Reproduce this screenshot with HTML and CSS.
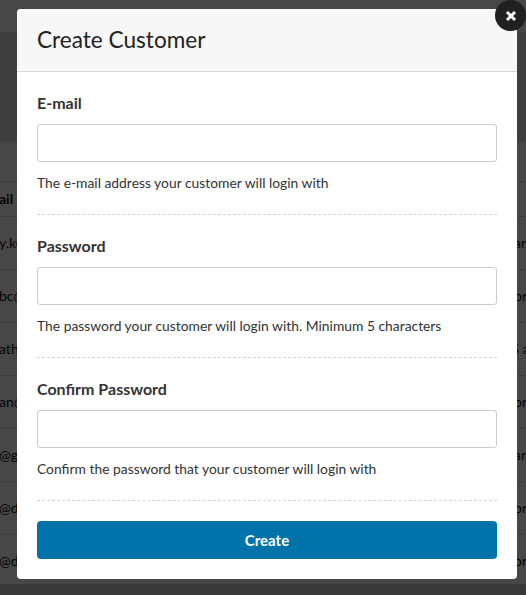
FILE: index.html
```html
<!DOCTYPE html>
<html lang="en">
<head>
<meta charset="utf-8">
<title>Create Customer</title>
<link rel="stylesheet" href="styles.css">
</head>
<body>
<div class="page">
  <div class="topbar"></div>
  <div class="band"></div>
  <div class="table-head"></div>
  <div class="thead"><span class="cell-left">ail</span></div>
  <div class="row"><span class="cell-left">y.ke</span><span class="cell-right">ar</span></div>
  <div class="row"><span class="cell-left">bc@</span><span class="cell-right">or</span></div>
  <div class="row"><span class="cell-left">ath</span><span class="cell-right cell-wide">5 a</span></div>
  <div class="row"><span class="cell-left">an@</span><span class="cell-right">or</span></div>
  <div class="row"><span class="cell-left">@gr</span><span class="cell-right">ar</span></div>
  <div class="row"><span class="cell-left">@d</span><span class="cell-right">or</span></div>
  <div class="row row-last"><span class="cell-left">@d</span><span class="cell-right">or</span></div>
  <div class="footer"></div>
</div>
<div class="overlay">
  <div class="modal">
    <button class="close" aria-label="Close">
      <svg width="12" height="12" viewBox="0 0 12 12"><path d="M2 2l8 8M10 2l-8 8" stroke="#fff" stroke-width="3" fill="none"/></svg>
    </button>
    <div class="modal-header"><h2>Create Customer</h2></div>
    <form class="modal-body">
      <div class="field">
        <label>E-mail</label>
        <input type="text">
        <p>The e-mail address your customer will login with</p>
      </div>
      <div class="field">
        <label>Password</label>
        <input type="password">
        <p>The password your customer will login with. Minimum 5 characters</p>
      </div>
      <div class="field">
        <label>Confirm Password</label>
        <input type="password">
        <p>Confirm the password that your customer will login with</p>
      </div>
      <button class="submit" type="button">Create</button>
    </form>
  </div>
</div>
</body>
</html>
```
FILE: styles.css
```css
* { box-sizing: border-box; }
html, body { margin: 0; height: 100%; }
body { font-family: Lato, sans-serif; color: #2b2b2b; background: #fff; overflow: hidden; }
.page { height: 595px; display: flex; flex-direction: column; background: #fff; overflow: hidden; }
.topbar { flex: none; height: 32px; background: #fff; }
.band { flex: none; height: 110px; background: #e0e0e0; }
.table-head { flex: none; height: 40px; background: #fff; border-bottom: 1px solid #ddd; }
.thead, .row { flex: none; display: flex; justify-content: space-between; font-size: 14px; color: #111; border-bottom: 1px solid #ddd; overflow: hidden; }
.thead { height: 35px; font-weight: 700; line-height: 34px; }
.row { height: 53px; line-height: 52px; }
.row-last { height: 49px; border-bottom: 0; }
.cell-left { white-space: nowrap; margin-left: -1px; }
.cell-right { width: 12px; white-space: nowrap; }
.cell-wide { width: 15px; }
.footer { flex: none; height: 11px; background: #c8c8c8; }
.overlay { position: fixed; inset: 0; background: rgba(0,0,0,.72); }
.modal { position: absolute; left: 17px; top: 9px; width: 500px; height: 570px; background: #fff; border-radius: 4px; }
.close { position: absolute; top: -9px; right: -9px; width: 31px; height: 31px; padding: 0; border: 0; border-radius: 50%; background: #202020; display: flex; align-items: center; justify-content: center; }
.modal-header { height: 63px; padding: 0 20px 2px; display: flex; align-items: center; background: #f7f7f7; border-bottom: 1px solid #d8d8d8; border-radius: 4px 4px 0 0; }
h2 { margin: 0; font-size: 22.6px; font-weight: 400; color: #222; }
.modal-body { padding: 20px 20px 0; display: flex; flex-direction: column; }
.field { height: 123px; border-bottom: 1px dashed #d4d4d4; margin-bottom: 20px; display: flex; flex-direction: column; }
.field label { font-size: 16px; font-weight: 700; line-height: 22px; color: #333; }
.field input { height: 38px; margin-top: 10px; border: 1px solid #ccc; border-radius: 3px; background: #fff; }
.field p { margin: 12px 0 0; font-size: 13.85px; line-height: 18px; color: #333; }
.submit { height: 38px; border: 0; border-radius: 4px; background: #0073aa; color: #fff; font: 700 15px Lato, sans-serif; }
```
